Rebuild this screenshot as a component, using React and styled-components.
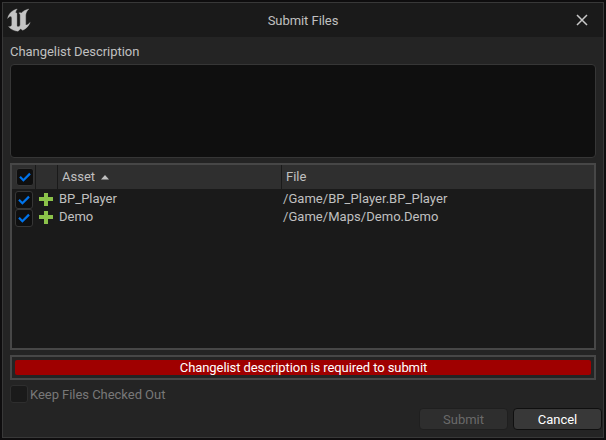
import React from "react";
import styled, { createGlobalStyle } from "styled-components";

const GlobalStyle = createGlobalStyle`
  * { box-sizing: border-box; }
  body {
    margin: 0;
    background: #0e0e0e;
    font-family: Roboto, "Liberation Sans", sans-serif;
    font-size: 13px;
    line-height: 18px;
    color: #c0c0c0;
  }
`;

const Backdrop = styled.div`
  width: 606px;
  height: 440px;
  padding: 2px;
  background: #0e0d0e;
`;

const Dialog = styled.div`
  width: 602px;
  height: 436px;
  border: 1px solid #383838;
  background: #242424;
  display: flex;
  flex-direction: column;
`;

const TitleBar = styled.header`
  height: 34px;
  flex: none;
  display: grid;
  grid-template-columns: 40px 1fr 40px;
  align-items: center;
  background: #1a1a1a;
  text-align: center;
`;

const Title = styled.h1`
  margin: 0;
  padding-top: 1px;
  font: inherit;
  letter-spacing: -0.05px;
`;

const Logo = styled.svg`
  display: block;
  margin-left: 4px;
`;

const CloseButton = styled.button`
  border: 0;
  padding: 0 3px 0 0;
  background: none;
  height: 34px;
  display: flex;
  align-items: center;
  justify-content: center;
`;

const Body = styled.main`
  flex: 1;
  padding: 6px 7px 0;
  display: flex;
  flex-direction: column;
`;

const Label = styled.label`
  height: 21px;
  letter-spacing: -0.05px;
`;

const Description = styled.textarea`
  display: block;
  width: 586px;
  height: 94px;
  resize: none;
  outline: none;
  border: 1px solid #363636;
  border-radius: 4px;
  background: #0f0f0f;
  color: #c0c0c0;
  font: inherit;
`;

const Table = styled.section`
  width: 586px;
  height: 187px;
  margin-top: 5px;
  border: 2px solid #474747;
  background: #1a1a1a;
`;

const HeaderRow = styled.div`
  display: grid;
  grid-template-columns: 24px 22px 224px 1fr;
  height: 24px;
  background: #2f2f2f;
`;

const HeaderCell = styled.div`
  display: flex;
  align-items: center;
  gap: 6px;
  padding-left: ${(p) => p.$pad || 0}px;
  border-right: ${(p) => (p.$last ? "0" : "1px solid #1a1a1a")};
`;

const Row = styled.div`
  display: grid;
  grid-template-columns: 24px 23px 224px 1fr;
  height: 18px;
  align-items: center;
`;

const Rows = styled.div`
  padding-top: 1px;
`;

const RowCell = styled.div`
  height: 18px;
  padding-left: ${(p) => p.$pad || 0}px;
  display: flex;
  align-items: center;
`;

const FileCell = styled(RowCell)`
  letter-spacing: 0.04px;
`;

const Box = styled.span`
  width: 18px;
  height: 18px;
  flex: none;
  display: flex;
  align-items: center;
  justify-content: center;
  border: 1px solid ${(p) => (p.$disabled ? "#2e2e2e" : "#363636")};
  border-radius: 3px;
  background: ${(p) => (p.$disabled ? "#1a1a1a" : "#0f0f0f")};
`;

const RowBox = styled(Box)`
  margin-top: 2px;
`;

const Message = styled.div`
  width: 586px;
  height: 25px;
  margin-top: 5px;
  padding: 3px;
  border: 2px solid #474747;
`;

const MessageText = styled.div`
  height: 15px;
  padding-left: 1px;
  border-radius: 2px;
  background: #9f0000;
  color: #fff;
  line-height: 15px;
  letter-spacing: -0.08px;
  text-align: center;
`;

const KeepRow = styled.div`
  display: flex;
  align-items: center;
  gap: 2px;
  height: 18px;
  margin-top: 5px;
  color: #787878;
`;

const KeepLabel = styled.span`
  padding-top: 1px;
  letter-spacing: -0.04px;
`;

const Actions = styled.footer`
  display: flex;
  justify-content: flex-end;
  gap: 5px;
  margin: 5px -6px 0 0;
`;

const Button = styled.button`
  width: 89px;
  height: 22px;
  padding: 1px 0 0;
  border: 1px solid ${(p) => (p.disabled ? "#1f1f1f" : "#0f0f0f")};
  border-radius: 4px;
  background: ${(p) => (p.disabled ? "#2e2e2e" : "#383838")};
  color: ${(p) => (p.disabled ? "#6a6a6a" : "#fff")};
  font: inherit;
  line-height: 19px;
`;

const Check = () => (
  <svg width="16" height="16" viewBox="0 0 16 16" fill="none">
    <path d="M3 7.8L6.4 11.2L13 4.6" stroke="#0074ec" strokeWidth="2.2" />
  </svg>
);

const Plus = () => (
  <svg width="14" height="14" viewBox="0 0 14 14">
    <path d="M5 1h4v4h5v4h-5v5h-4v-5h-5v-4h5z" fill="#8bc24a" />
  </svg>
);

const files = [
  { asset: "BP_Player", file: "/Game/BP_Player.BP_Player" },
  { asset: "Demo", file: "/Game/Maps/Demo.Demo" },
];

export default function App() {
  return (
    <Backdrop>
      <GlobalStyle />
      <Dialog>
        <TitleBar>
          <Logo width="24" height="24" viewBox="0 0 24 24">
            <path
              d="M10.2 1C5.4 2.2 1.8 5.2 .6 10.4C1.9 8.9 3 8.2 3.9 8.4C4.6 8.6 4.8 9.2 4.8 10V16.6C4.8 18.2 3.6 18.9 1.6 18.6C4 21.6 7.3 23 11 23.2L13.7 20.7L15.7 22.3C19.2 20.6 21.8 18 23.2 14.4C21.5 16.1 20 17.2 18.7 17V7C18.9 4.8 20 2.8 21.8 1C18.6 1.8 16.2 3 14.4 5C13.5 4.7 12.7 4.7 11.8 5C12.7 5.5 13.2 6.1 13.2 7V17.2C12.6 18.2 11.9 18.7 11.1 18.7C10.3 18.7 9.9 18.1 9.9 17.2V5.2C9.6 5 9.2 4.7 8.5 4.8C8.7 3.4 9.3 2 10.2 1Z"
              fill="#c4c4c4"
              stroke="#c4c4c4"
              strokeWidth=".35"
            />
          </Logo>
          <Title>Submit Files</Title>
          <CloseButton aria-label="Close">
            <svg width="12" height="12" viewBox="0 0 12 12">
              <path d="M1 1L11 11M11 1L1 11" stroke="#c8c8c8" strokeWidth="1.5" />
            </svg>
          </CloseButton>
        </TitleBar>
        <Body>
          <Label htmlFor="description">Changelist Description</Label>
          <Description id="description" />
          <Table>
            <HeaderRow>
              <HeaderCell $pad={4}>
                <Box><Check /></Box>
              </HeaderCell>
              <HeaderCell />
              <HeaderCell $pad={4}>
                Asset
                <svg width="8" height="5" viewBox="0 0 8 5">
                  <path d="M0 4.5L4 0L8 4.5Z" fill="#c0c0c0" />
                </svg>
              </HeaderCell>
              <HeaderCell $pad={4} $last>File</HeaderCell>
            </HeaderRow>
            <Rows>
              {files.map((f) => (
                <Row key={f.asset}>
                  <RowCell $pad={3}><RowBox><Check /></RowBox></RowCell>
                  <RowCell $pad={3}><Plus /></RowCell>
                  <RowCell>{f.asset}</RowCell>
                  <FileCell>{f.file}</FileCell>
                </Row>
              ))}
            </Rows>
          </Table>
          <Message>
            <MessageText>Changelist description is required to submit</MessageText>
          </Message>
          <KeepRow>
            <Box $disabled />
            <KeepLabel>Keep Files Checked Out</KeepLabel>
          </KeepRow>
          <Actions>
            <Button disabled>Submit</Button>
            <Button>Cancel</Button>
          </Actions>
        </Body>
      </Dialog>
    </Backdrop>
  );
}
